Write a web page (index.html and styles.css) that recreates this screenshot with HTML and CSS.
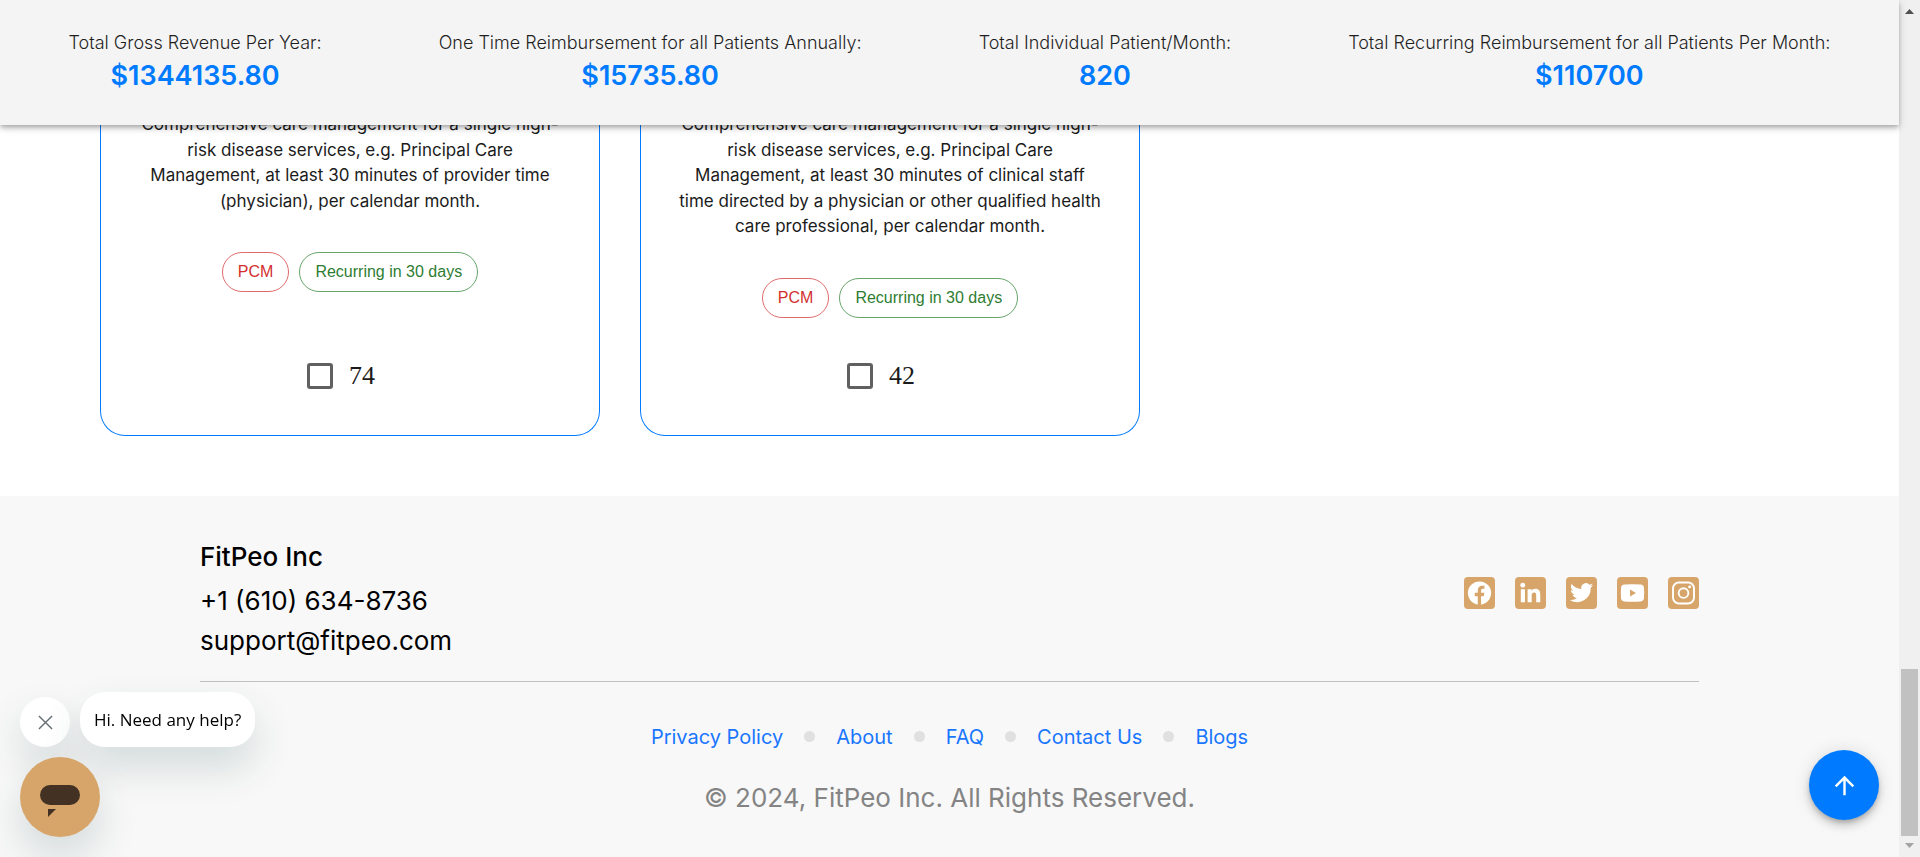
FILE: index.html
```html
<!DOCTYPE html>
<html lang="en">
<head>
<meta charset="utf-8">
<title>FitPeo Revenue Calculator</title>
<link rel="stylesheet" href="styles.css">
</head>
<body>
<div class="page">
  <header class="totals">
    <div class="total"><p class="total-label">Total Gross Revenue Per Year:</p><p class="total-value">$1344135.80</p></div>
    <div class="total"><p class="total-label">One Time Reimbursement for all Patients Annually:</p><p class="total-value">$15735.80</p></div>
    <div class="total"><p class="total-label">Total Individual Patient/Month:</p><p class="total-value">820</p></div>
    <div class="total"><p class="total-label">Total Recurring Reimbursement for all Patients Per Month:</p><p class="total-value">$110700</p></div>
  </header>

  <main class="cards">
    <article class="card">
      <p class="card-text">Comprehensive care management for a single high-risk disease services, e.g. Principal Care Management, at least 30 minutes of provider time (physician), per calendar month.</p>
      <div class="chips"><span class="chip chip-red">PCM</span><span class="chip chip-green">Recurring in 30 days</span></div>
      <label class="pick"><input type="checkbox" class="box"><span>74</span></label>
    </article>
    <article class="card">
      <p class="card-text">Comprehensive care management for a single high-risk disease services, e.g. Principal Care Management, at least 30 minutes of clinical staff time directed by a physician or other qualified health care professional, per calendar month.</p>
      <div class="chips"><span class="chip chip-red">PCM</span><span class="chip chip-green">Recurring in 30 days</span></div>
      <label class="pick"><input type="checkbox" class="box"><span>42</span></label>
    </article>
  </main>

  <footer class="footer">
    <div class="footer-top">
      <address class="contact">
        <p class="company">FitPeo Inc</p>
        <p>+1 (610) 634-8736</p>
        <p>support@fitpeo.com</p>
      </address>
      <nav class="social" aria-label="Social media">
        <a href="#" aria-label="Facebook"><svg viewBox="0 0 32 32"><circle cx="16" cy="16" r="12"/><path class="cut" d="M14.2 29V19.4h-3.1v-3.6h3.1v-2.6c0-3.1 1.8-4.8 4.6-4.8 1.300 0 2.300.2 2.300.2v3h-1.500c-1.500 0-2 .9-2 1.900v2.300h3.400l-.6 3.600h-2.800V29z"/></svg></a>
        <a href="#" aria-label="LinkedIn"><svg viewBox="0 0 32 32"><circle cx="8" cy="8" r="2.500"/><path d="M6 12h4.300v13.500H6zM13 12h4v1.800c.7-1.200 2.100-2.100 4-2.100 3.900 0 5.100 2.500 5.100 6v7.800h-4.200v-6.700c0-1.700-.1-3.400-2.200-3.400-2.100 0-2.500 1.600-2.500 3.300v6.800H13z"/></svg></a>
        <a href="#" aria-label="Twitter"><svg viewBox="0 0 32 32"><path d="M28 8.100c-.9.4-1.800.7-2.800.8 1-.6 1.800-1.600 2.200-2.700-1 .6-2 1-3.100 1.200a4.900 4.900 0 0 0-8.400 4.500C11.800 11.700 8.200 9.700 5.800 6.800a4.900 4.900 0 0 0 1.500 6.600c-.8 0-1.600-.2-2.200-.6v.1c0 2.400 1.700 4.400 3.900 4.800-.7.200-1.500.2-2.200.1.600 2 2.400 3.400 4.600 3.400A9.900 9.900 0 0 1 4 23.200 14 14 0 0 0 25.500 10.700c1-.7 1.800-1.600 2.500-2.600z"/></svg></a>
        <a href="#" aria-label="YouTube"><svg viewBox="0 0 32 32"><path d="M7.500 7.300Q16 6.600 24.500 7.300 27.500 7.600 27.800 10.500 28.300 16 27.800 21.500 27.500 24.400 24.500 24.700 16 25.400 7.500 24.700 4.500 24.400 4.200 21.500 3.700 16 4.200 10.500 4.500 7.600 7.500 7.300z"/><path class="cut" d="M13.500 12.400v7.200l6-3.600z"/></svg></a>
        <a href="#" aria-label="Instagram"><svg viewBox="0 0 32 32"><rect class="line" x="5.200" y="5.200" width="21.600" height="21.600" rx="6"/><circle class="line" cx="16" cy="16" r="5"/><circle cx="22.300" cy="9.700" r="1.500"/></svg></a>
      </nav>
    </div>
    <nav class="links" aria-label="Footer">
      <a href="#">Privacy Policy</a><i class="dot"></i><a href="#">About</a><i class="dot"></i><a href="#">FAQ</a><i class="dot"></i><a href="#">Contact Us</a><i class="dot"></i><a href="#">Blogs</a>
    </nav>
    <p class="copyright">© 2024, FitPeo Inc. All Rights Reserved.</p>
  </footer>
</div>

<aside class="scrollbar" aria-hidden="true">
  <svg class="arrow" viewBox="0 0 21 17"><path fill="#505050" d="M6 14l4.500-5 4.500 5z"/></svg>
  <div class="thumb"></div>
  <svg class="arrow" viewBox="0 0 21 21"><path fill="#a3a3a3" d="M6 7h9l-4.500 5z"/></svg>
</aside>

<section class="chat" aria-label="Chat">
  <div class="chat-row">
    <button class="chat-close" aria-label="Close"><svg viewBox="0 0 16 16"><path d="M1 1l14 14M15 1L1 15"/></svg></button>
    <button class="chat-hint">Hi. Need any help?</button>
  </div>
  <button class="chat-open" aria-label="Open chat"><svg viewBox="0 0 40 34"><rect width="40" height="20" rx="10"/><path d="M8 24h8l-8 8z"/></svg></button>
</section>

<button class="to-top" aria-label="Back to top"><svg viewBox="0 0 24 24"><path d="M4 12l1.410 1.410L11 7.830V20h2V7.830l5.580 5.590L20 12l-8-8z"/></svg></button>
</body>
</html>
```

FILE: styles.css
```css
* { box-sizing: border-box; }
html { height: 100%; }
body {
  display: grid;
  grid-template-columns: 1fr 21px;
  min-height: 100%;
  margin: 0;
  background: #fff;
  color: #1b1b1b;
  font-family: Inter, "Liberation Sans", sans-serif;
}
p { margin: 0; }
a { color: inherit; text-decoration: none; }
button { padding: 0; border: 0; font: inherit; cursor: pointer; }
.page { display: flex; flex-direction: column; min-width: 0; }

.totals {
  position: relative;
  z-index: 1;
  display: flex;
  justify-content: space-around;
  padding: 30px 10px;
  background: #f4f4f4;
  box-shadow: 0 2px 4px -1px rgba(0, 0, 0, .2), 0 4px 5px rgba(0, 0, 0, .14), 0 1px 10px rgba(0, 0, 0, .12);
  text-align: center;
}
.total-label { font-size: 18px; font-weight: 300; line-height: 26px; color: #1f1f1f; }
.total-value { font-size: 27px; font-weight: 600; line-height: 39px; color: #007bff; }

.cards {
  display: flex;
  gap: 40px;
  margin-top: -13px;
  padding: 0 100px 60px;
}
.card {
  display: flex;
  flex-direction: column;
  width: 500px;
  padding: 0 36px 36px;
  border: 1px solid #007bff;
  border-top: 0;
  border-radius: 0 0 25px 25px;
  text-align: center;
}
.card-text { font-size: 17px; line-height: 1.5; }
.chips { display: flex; justify-content: center; gap: 10px; margin: 38px 0 35px; }
.chip {
  padding: 0 15px;
  border: 1px solid;
  border-radius: 20px;
  font-family: "Liberation Sans", sans-serif;
  font-size: 16px;
  line-height: 38px;
}
.chip-red { border-color: #e06b6b; color: #d32f2f; }
.chip-green { border-color: #66a569; color: #2e7d32; }
.pick {
  display: flex;
  align-items: center;
  justify-content: center;
  gap: 16px;
  margin: auto 18px 0 0;
  font-family: "Liberation Serif", serif;
  font-size: 26px;
  line-height: 46px;
}
.box {
  appearance: none;
  width: 26px;
  height: 26px;
  margin: 0;
  border: 3px solid #606060;
  border-radius: 3px;
}

.footer {
  flex: 1;
  padding: 41px 200px 0;
  background: #f8f8f8;
}
.footer-top {
  display: flex;
  align-items: center;
  justify-content: space-between;
  padding-bottom: 20px;
  border-bottom: 1px solid #c1c1c1;
}
.contact { color: #000; font-size: 26px; font-style: normal; line-height: 40px; }
.company { margin-bottom: 4px; font-weight: 500; }
.social { display: flex; gap: 20px; margin-bottom: 12px; }
.social a { display: flex; width: 31px; height: 32px; border-radius: 4px; background: #d7a56a; }
.social svg { width: 100%; fill: #fff; }
.social .cut { fill: #d7a56a; }
.social .line { fill: none; stroke: #fff; stroke-width: 2; }
.links {
  display: flex;
  align-items: center;
  justify-content: center;
  gap: 21px;
  margin-top: 40px;
  color: #1976ff;
  font-size: 20px;
  line-height: 30px;
}
.dot { width: 11px; height: 11px; border-radius: 50%; background: #e0e0e0; }
.copyright { margin-top: 26px; color: #848484; font-size: 26px; line-height: 40px; text-align: center; }

.scrollbar { display: flex; flex-direction: column; background: #f0f0f0; }
.arrow { width: 21px; }
.thumb { height: 167px; margin: auto 2px 0; background: #c1c1c1; }

.chat { position: fixed; left: 20px; bottom: 20px; display: grid; gap: 10px; }
.chat-row { display: flex; align-items: flex-end; gap: 10px; }
.chat button { box-shadow: 0 20px 40px rgba(25, 70, 70, .16); }
.chat-close { width: 50px; height: 50px; border-radius: 50%; background: #fff; }
.chat-close svg { display: block; width: 15px; margin: 0 auto; fill: none; stroke: #666e73; stroke-width: 1.500; }
.chat .chat-hint {
  height: 55px;
  padding: 0 14px;
  border-radius: 25px;
  background: #fff;
  color: #000;
  font-family: "Open Sans", sans-serif;
  font-size: 17px;
}
.chat-open { width: 80px; height: 80px; border-radius: 50%; background: #d7a56a; }
.chat-open svg { display: block; width: 40px; margin: 10px auto 0; fill: #433224; }
.to-top {
  position: fixed;
  right: 41px;
  bottom: 37px;
  display: grid;
  place-items: center;
  width: 70px;
  height: 70px;
  border-radius: 50%;
  background: #007bff;
  box-shadow: 0 3px 5px -1px rgba(0, 0, 0, .2), 0 6px 10px rgba(0, 0, 0, .14), 0 1px 18px rgba(0, 0, 0, .12);
}
.to-top svg { width: 29px; fill: #fff; }
```
